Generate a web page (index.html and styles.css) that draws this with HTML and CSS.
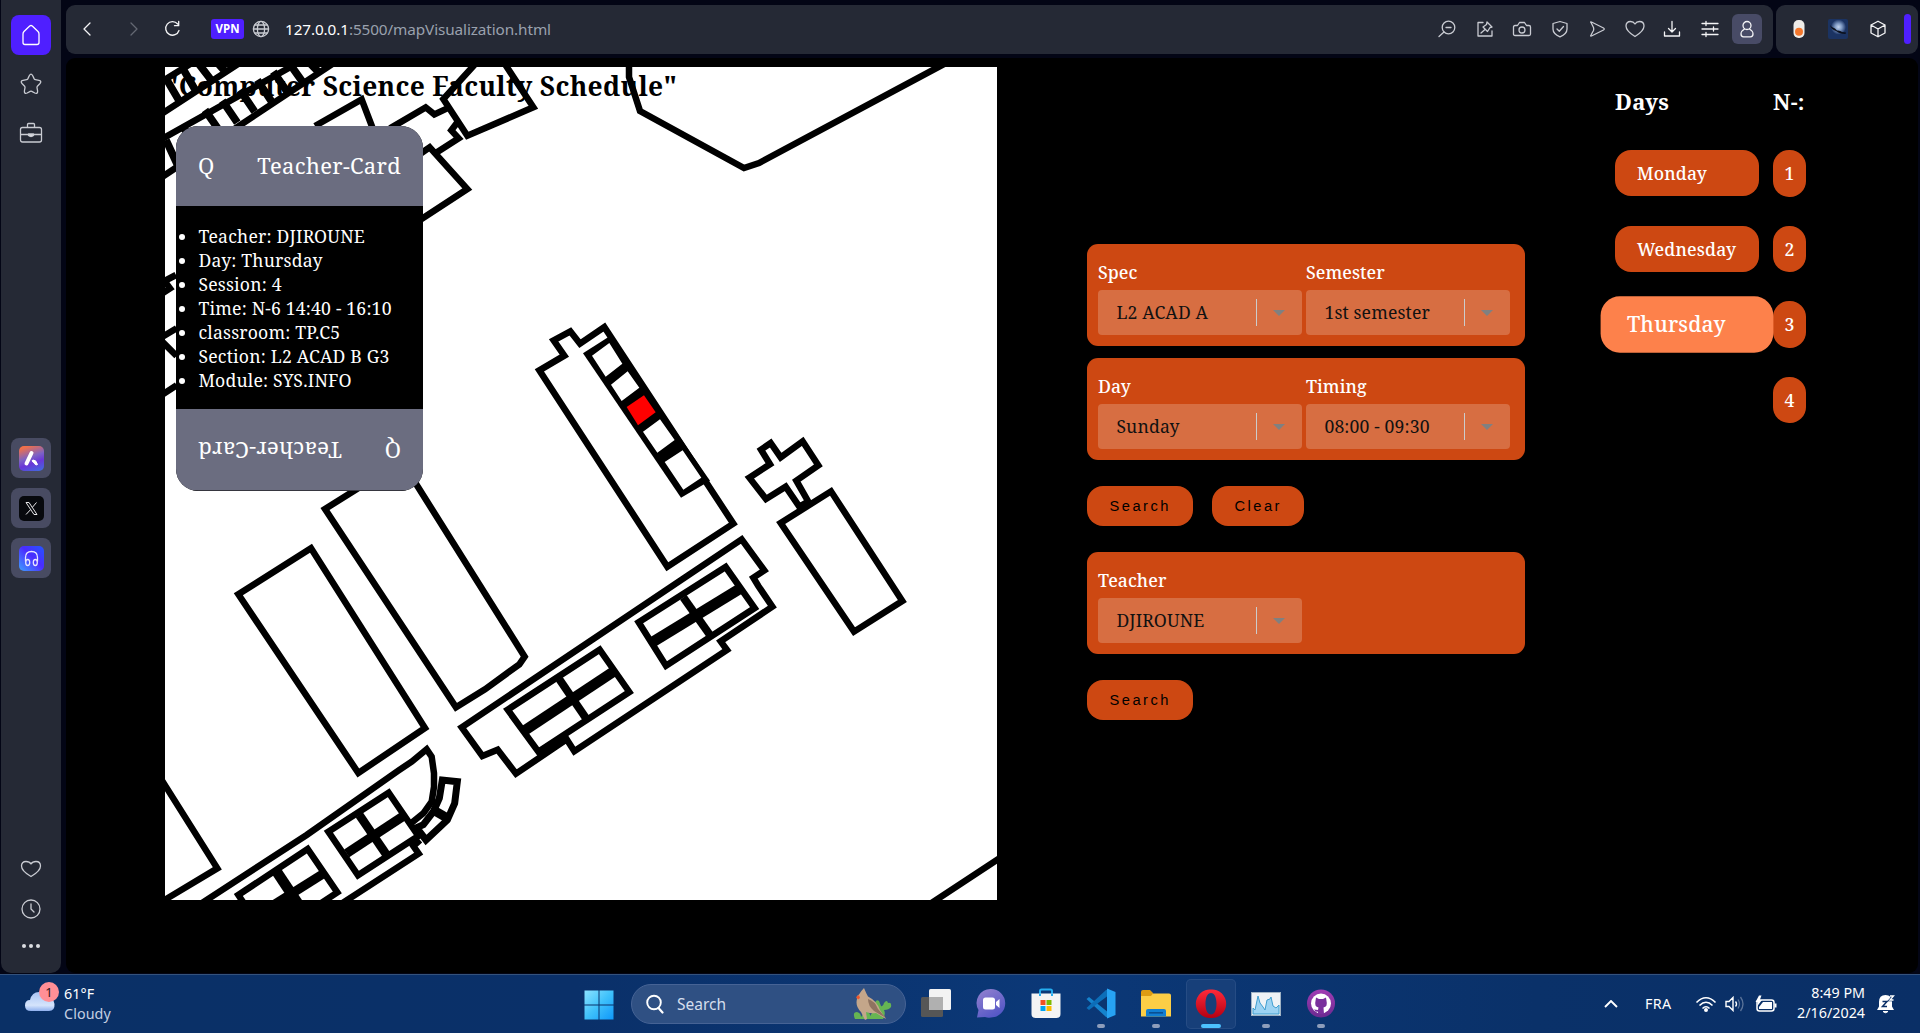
FILE: index.html
```html
<!DOCTYPE html>
<html lang="en">
<head>
<meta charset="utf-8">
<title>Computer Science Faculty Schedule</title>
<link rel="stylesheet" href="styles.css">
</head>
<body>
<div class="browser">
  <nav class="sidebar">
    <span class="home"><svg class="ic" width="22" height="24" viewBox="0 0 22 24"><path d="M3 11Q3 9.500 4 8.500L9.700 3Q11 2 12.300 3L18 8.500Q19 9.500 19 11V19.500Q19 21.500 17 21.500H5Q3 21.500 3 19.500Z"/></svg></span>
    <svg class="ic star" width="24" height="24" viewBox="0 0 24 24"><path d="M10.400 3.500Q12 .8 13.600 3.500L15.200 6.900Q15.600 7.600 16.400 7.700L20 8.300Q23 9 21 11.500L18.400 14.200Q17.900 14.800 18 15.600L18.600 19Q18.800 22.200 15.800 21L12.800 19.400Q12 19 11.200 19.400L8.200 21Q5.200 22.200 5.400 19L6 15.600Q6.100 14.800 5.600 14.200L3 11.500Q1 9 4 8.300L7.600 7.700Q8.400 7.600 8.800 6.900Z"/></svg>
    <svg class="ic case" width="24" height="22" viewBox="0 0 24 22"><path d="M8.500 5V2.500Q8.500 1.500 9.500 1.500H14.500Q15.500 1.500 15.500 2.500V5M3.500 5.500H20.500Q22.500 5.500 22.500 7.500V18Q22.500 20 20.500 20H3.500Q1.500 20 1.500 18V7.500Q1.500 5.500 3.500 5.500ZM1.500 12.500H9M15 12.500H22.500"/><path d="M9.500 12h5v1.500q-2.500 2-5 0z" fill="#dcdde2"/></svg>
    <div class="apps">
      <span class="app"><i class="tile aria"><svg width="25" height="25" viewBox="0 0 25 25"><path d="M7.500 17.500L12.500 7" stroke="#fff" stroke-width="4" stroke-linecap="round"/><path d="M14 14Q17 13.500 18.500 18.500L17 19Q14.500 17 13 14.800Z" fill="#fff" stroke="#fff"/></svg></i></span>
      <span class="app"><i class="tile xapp"><svg width="25" height="25" viewBox="0 0 25 25"><path d="M7 6.500H10L18 18.500H15ZM17.500 6.500L13.400 11.300M11.500 13.700L7 18.500" fill="none" stroke="#e8e8ea" stroke-width="1"/></svg></i></span>
      <span class="app"><i class="tile player"><svg width="25" height="25" viewBox="0 0 25 25"><path d="M6.500 15.500V11.500Q6.500 5.500 12.500 5.500T18.500 11.500V15.500" fill="none" stroke="#e6e4ff" stroke-width="1.300"/><ellipse cx="8.700" cy="16.500" rx="2" ry="3" fill="none" stroke="#e6e4ff" stroke-width="1.300"/><ellipse cx="16.300" cy="16.500" rx="2" ry="3" fill="none" stroke="#e6e4ff" stroke-width="1.300"/></svg></i></span>
    </div>
    <div class="tools">
      <svg class="ic" width="22" height="18" viewBox="0 0 22 18"><path d="M11 16.500Q1.500 11 1.500 6Q1.500 1.500 6 1.500Q9.500 1.500 11 4Q12.500 1.500 16 1.500Q20.500 1.500 20.500 6Q20.500 11 11 16.500Z"/></svg>
      <svg class="ic" width="20" height="20" viewBox="0 0 20 20"><circle cx="10" cy="10" r="9"/><path d="M10 5V10L13 13"/></svg>
      <svg class="dots" width="20" height="6" viewBox="0 0 20 6"><circle cx="3" cy="3" r="2"/><circle cx="10" cy="3" r="2"/><circle cx="17" cy="3" r="2"/></svg>
    </div>
  </nav>

  <div class="main">
    <header class="bars">
      <div class="address">
        <svg class="ic white back" width="10" height="14" viewBox="0 0 10 14"><path d="M8 1L2 7L8 13"/></svg>
        <svg class="ic dim fwd" width="10" height="14" viewBox="0 0 10 14"><path d="M2 1L8 7L2 13"/></svg>
        <svg class="ic white reload" width="17" height="17" viewBox="0 0 17 17"><path d="M13.700 4A6.800 6.800 0 1 0 15 10.500M14.700 1.500V5.700H10.500"/></svg>
        <span class="vpn">VPN</span>
        <svg class="ic globe" width="18" height="18" viewBox="0 0 18 18"><circle cx="9" cy="9" r="7.600"/><ellipse cx="9" cy="9" rx="3.600" ry="7.600"/><path d="M1.500 9H16.500M2.700 5H15.300M2.700 13H15.300"/></svg>
        <span class="url"><b>127.0.0.1</b>:5500/mapVisualization.html</span>
        <div class="actions">
          <svg class="ic" width="20" height="20" viewBox="0 0 20 20"><circle cx="11.500" cy="8.500" r="6.300"/><path d="M7 13L2 17.500M9 8.500H14"/></svg>
          <svg class="ic" width="20" height="20" viewBox="0 0 20 20"><path d="M8 3.500H3V17H17V12M12 3L17 8L15 8.500L12.500 12.500L8 8L11.500 5.500ZM10 10.500L6 14"/></svg>
          <svg class="ic" width="20" height="20" viewBox="0 0 20 20"><path d="M3 6.500H5.500L7.500 3.500H12.500L14.500 6.500H17Q18.500 6.500 18.500 8V15Q18.500 16.500 17 16.500H3Q1.500 16.500 1.500 15V8Q1.500 6.500 3 6.500Z"/><circle cx="10" cy="11" r="3"/></svg>
          <svg class="ic" width="20" height="20" viewBox="0 0 20 20"><path d="M10 2.500L17 4.500V10Q17 15 10 17.800Q3 15 3 10V4.500ZM7 10L9.300 12.300L13.500 7.500"/></svg>
          <svg class="ic" width="20" height="20" viewBox="0 0 20 20"><path d="M4 3.500Q3 2.500 4.500 3L16.500 9Q18 10 16.500 11L4.500 17Q3 17.500 4 16L6.500 11.500Q7 10 6.500 8.500Z"/></svg>
          <svg class="ic" width="20" height="20" viewBox="0 0 20 20"><path d="M10 17.500Q1 12 1 7Q1 2.500 5.500 2.500Q8.500 2.500 10 5Q11.500 2.500 14.500 2.500Q19 2.500 19 7Q19 12 10 17.500Z"/></svg>
          <svg class="ic white" width="20" height="20" viewBox="0 0 20 20"><path d="M10 2.500V13M6.500 9.500L10 13L13.500 9.500M2.500 13V17H17.500V13"/></svg>
          <svg class="ic white" width="20" height="20" viewBox="0 0 20 20"><path d="M2 4.500H18M2 10H18M2 15.500H18M6 2.500V6.500M13.500 8V12M6 13.500V17.500"/></svg>
          <span class="profile"><svg class="ic white" width="18" height="18" viewBox="0 0 18 18"><circle cx="9" cy="5.500" r="4"/><path d="M6.500 9Q3 11 3 14Q3 16.800 5.500 16.800H12.500Q15 16.800 15 14Q15 11 11.500 9"/></svg></span>
        </div>
      </div>
      <div class="exts">
        <svg width="14" height="20" viewBox="0 0 14 20"><rect x="1.500" y="1" width="11" height="18" rx="5" fill="#efece8"/><circle cx="7" cy="12.800" r="4" fill="#f4772d"/></svg>
        <svg width="20" height="20" viewBox="0 0 20 20"><defs><radialGradient id="moon"><stop offset="0" stop-color="#c4d4ee"/><stop offset=".45" stop-color="#7f9ac4"/><stop offset="1" stop-color="#1d3566"/></radialGradient></defs><rect width="20" height="20" rx="2" fill="#1b3362"/><circle cx="10.500" cy="8" r="7.500" fill="url(#moon)"/><path d="M2 6Q4 9 7 9.500L9 11.500Q12 11 14 13L18 13.500L17.500 15L13 14.500Q10 13.500 8 12Q3 10.500 2 6Z" fill="#0b101c"/></svg>
        <svg class="ic white" width="18" height="18" viewBox="0 0 18 18"><path d="M9 1.200L16 5V13L9 16.800L2 13V5ZM2 5L9 9L16 5M9 9V16.800"/></svg>
        <i class="bar"></i>
      </div>
    </header>

    <main class="page">
      <section class="map">
        <svg class="plan" width="832" height="833" viewBox="165 67 832 833">
          <rect x="165" y="67" width="832" height="833" fill="#fff"/>
          <g class="wall" transform="translate(160 60) scale(.33333)">
            <path d="M0 165L245 5M0 68L110 0"/>
            <path d="M22 62L62 130M70 28L110 97M115 10L158 66M165 0L200 40" stroke-width="23"/>
            <path d="M0 240L420 5M0 355L520 10"/>
            <path d="M18 240L55 320M66 195L105 258M135 150L180 215M187 122L232 188M240 90L284 155M292 60L335 125M340 35L382 96M388 10L428 66M440 0L478 38" stroke-width="23"/>
            <path d="M465 198L605 118L640 210"/>
            <path d="M690 205L797 142L823 163L860 146M952 5L850 117L922 227L1120 142L1030 5M890 190L874 211L896 235L832 276M780 282L809 262L922 387L780 480"/>
            <path d="M0 670L48 645M15 665L30 685L0 705M0 835L50 805M0 838L50 888M0 1008L50 976"/>
          </g>
          <path class="wall full" d="M629 60V77L640 111L744 168L759 163L946 63M930 904L1000 858"/>
          <g transform="translate(500 300) scale(.33333)">
            <path class="wall" d="M118 211L193 167L161 121L211 94L240 131L313 81L700 671L502 800Z"/>
            <path d="M249 160L330 108L630 542L543 593Z"/>
            <path fill="#fff" d="M276 167L328 129L367 191L317 230ZM333 254L383 214L418 263L365 303ZM429 395L480 358L524 420L472 458ZM494 486L548 451L604 533L550 569Z"/>
            <path fill="#f00" d="M380 321L432 286L467 337L414 376Z"/>
            <path class="wall" d="M748 533L810 493L783 449L812 429L842 472L908 424L955 496L889 542L925 605L898 620L857 560L798 597Z"/>
            <path class="wall" d="M842 669L993 574L1207 903L1062 995Z"/>
          </g>
          <g class="wall" transform="translate(440 520) scale(.33333)">
            <path d="M65 622L905 58L973 151L940 173L955 198L997 260L842 364L861 390L403 694L380 658L228 761L173 689L127 708Z"/>
            <path d="M203 569L479 389L568 516L295 695Z"/>
            <path d="M300 700L380 650" stroke-width="30"/>
            <path d="M250 634L525 452" stroke-width="32"/><path d="M358 478L440 598" stroke-width="24"/>
            <path d="M596 307L857 141L944 264L678 437Z"/>
            <path d="M635 368L905 203" stroke-width="32"/><path d="M730 232L812 348" stroke-width="24"/>
          </g>
          <g class="wall" transform="translate(160 480) scale(.33333)">
            <path d="M235 343L453 205L795 744L595 879Z"/>
            <path d="M495 87L725 -57L1094 530L1078 553L975 628L888 682Z"/>
            <path d="M0 892L172 1165L0 1268"/>
            <path d="M100 1286L440 1065L715 872L755 845L800 808L815 830L822 880V920L815 965L790 1000L755 1028"/>
            <path d="M505 1055L686 938L775 1068L594 1186Z"/>
            <path d="M560 1120L735 1005" stroke-width="28"/><path d="M598 1005L680 1125" stroke-width="26"/>
            <path d="M780 1080L760 1098L776 1121L540 1274"/>
            <path d="M765 1045L790 1034L820 995L838 955L847 900L892 905L884 970L862 1020L798 1080L775 1050" stroke-width="21"/>
            <path d="M825 993L868 1018" stroke-width="28"/>
            <path d="M265 1290L235 1245L443 1107L532 1237L460 1285"/>
            <path d="M320 1288L495 1178" stroke-width="28"/><path d="M350 1175L420 1280" stroke-width="32"/>
          </g>
        </svg>
        <h1 class="title">"Computer Science Faculty Schedule"</h1>
        <article class="card">
          <div class="cap"><span>Q</span><span>Teacher-Card</span></div>
          <ul class="facts">
            <li>Teacher: DJIROUNE</li>
            <li>Day: Thursday</li>
            <li>Session: 4</li>
            <li>Time: N-6 14:40 - 16:10</li>
            <li>classroom: TP.C5</li>
            <li>Section: L2 ACAD B G3</li>
            <li>Module: SYS.INFO</li>
          </ul>
          <div class="cap flip"><span>Q</span><span>Teacher-Card</span></div>
        </article>
      </section>

      <section class="forms">
        <div class="panel">
          <label>Spec<span class="select">L2 ACAD A<i></i></span></label>
          <label>Semester<span class="select">1st semester<i></i></span></label>
        </div>
        <div class="panel">
          <label>Day<span class="select">Sunday<i></i></span></label>
          <label>Timing<span class="select">08:00 - 09:30<i></i></span></label>
        </div>
        <div class="buttons"><button>Search</button><button>Clear</button></div>
        <div class="panel">
          <label>Teacher<span class="select">DJIROUNE<i></i></span></label>
        </div>
        <div class="buttons"><button>Search</button></div>
      </section>

      <section class="days">
        <div class="col">
          <h2>Days</h2>
          <span class="day">Monday</span>
          <span class="day">Wednesday</span>
          <span class="day active">Thursday</span>
        </div>
        <div class="col">
          <h2>N-:</h2>
          <span class="num">1</span>
          <span class="num">2</span>
          <span class="num">3</span>
          <span class="num">4</span>
        </div>
      </section>
    </main>
  </div>
</div>

<footer class="taskbar">
  <div class="weather">
    <svg width="38" height="34" viewBox="0 0 38 34"><defs><linearGradient id="cl" x2="0" y2="1"><stop offset="0" stop-color="#a9c4f4"/><stop offset=".7" stop-color="#d5e4fc"/><stop offset="1" stop-color="#8fb0ee"/></linearGradient></defs><path d="M7 29Q1 29 1 23.500Q1 18 6 18Q8 10 15 10Q20 10 22.500 15Q30 16 30.500 22Q31 29 25 29Z" fill="url(#cl)"/><circle cx="25" cy="10" r="10" fill="#ff8f96"/><text x="25" y="15" class="badge">1</text></svg>
    <p>61°F<br><span>Cloudy</span></p>
  </div>
  <div class="dock">
    <svg class="win" width="30" height="30" viewBox="0 0 30 30"><defs><linearGradient id="wn" gradientUnits="userSpaceOnUse" x1="0" y1="0" x2="30" y2="30"><stop offset="0" stop-color="#8ee4ff"/><stop offset=".5" stop-color="#3fc1fb"/><stop offset="1" stop-color="#0d96fa"/></linearGradient></defs><path fill="url(#wn)" d="M.5.500H14.500V14.500H.5ZM15.500.500H29.500V14.500H15.500ZM.5 15.500H14.500V29.500H.5ZM15.500 15.500H29.500V29.500H15.500Z"/></svg>
    <div class="search">
      <svg width="20" height="20" viewBox="0 0 20 20"><circle cx="9" cy="8.500" r="6.800" fill="none" stroke="#fff" stroke-width="1.900"/><path d="M13.500 14L17.500 18.500" stroke="#fff" stroke-width="2.200" stroke-linecap="round"/></svg>
      <span>Search</span>
      <svg class="bird" width="40" height="32" viewBox="0 0 40 32"><path d="M2 31Q-1 24 4 24Q8 25 8 29L12 24Q17 22 18 31ZM18 31Q16 25 22 24L22 15Q23 11 26 13L28 18Q30 19 31 15Q34 11 35 15Q39 14 38 19Q36 22 31 22Q33 26 30 31Z" fill="#66b552"/><path d="M11 0Q8 3 6 6.500Q3 8 4 11Q2 18 8 24L12 32L14 31L13 24Q18 26 23 25L33 31L27 22Q24 13 15 8.500Q13 5 11 0Z" fill="#c4a68a"/><path d="M15 11Q22 13 25 21L33 30L21 23Q15 18 15 11Z" fill="#8f7360"/><path d="M6 7L3 9L5 11.500L7 10Z" fill="#f0562d"/></svg>
    </div>
    <span class="task"><svg width="32" height="32" viewBox="0 0 32 32"><rect x="1" y="9" width="22" height="20" rx="1.500" fill="#565656"/><rect x="9" y="1" width="22" height="21" rx="1.500" fill="#f3f3f3"/><path d="M9 9H23V22H9Z" fill="#b0b0b0"/></svg></span>
    <span class="task"><svg width="32" height="32" viewBox="0 0 32 32"><defs><linearGradient id="ct" x2=".6" y2="1"><stop offset="0" stop-color="#9583cf"/><stop offset="1" stop-color="#5457c6"/></linearGradient></defs><path d="M16 1A14 14 0 0 1 16 29.500Q13 30 10 29L2 29.500L3.500 22A14 14 0 0 1 16 1Z" fill="url(#ct)"/><rect x="8" y="9.500" width="12" height="12" rx="2.500" fill="#fff"/><path d="M21 14L24.500 11V20L21 17Z" fill="#fff"/></svg></span>
    <span class="task"><svg width="32" height="32" viewBox="0 0 32 32"><path d="M10 8V3Q10 1.500 11.500 1.500H20.500Q22 1.500 22 3V8" fill="none" stroke="#25aef0" stroke-width="2"/><path d="M1.500 5.500H30.500V26Q30.500 30 26.500 30H5.500Q1.500 30 1.500 26Z" fill="#f4f4f4"/><path d="M10 8V5.500M22 8V5.500" stroke="#25aef0" stroke-width="2"/><path fill="#f25022" d="M10.500 12h5v5h-5z"/><path fill="#7fba00" d="M16.500 12h5v5h-5z"/><path fill="#00a4ef" d="M10.500 18h5v5h-5z"/><path fill="#ffb900" d="M16.500 18h5v5h-5z"/></svg></span>
    <span class="task run"><svg width="32" height="32" viewBox="0 0 32 32"><path d="M1.500 11L4 9L24 25V30L21 29Z" fill="#1583cd"/><path d="M1.500 20L4 22L24 7V1L21 2Z" fill="#0c6eb8"/><path d="M22 .5L30.500 4V27L22 30.500Z" fill="#27a3f3"/><path d="M22 9L13 15.500L22 22.500Z" fill="#0b3570"/></svg></span>
    <span class="task run"><svg width="32" height="32" viewBox="0 0 32 32"><path d="M1 4Q1 2 3 2H10L13 5V9H1Z" fill="#dd9c12"/><path d="M1 8H11L13 5.500H29Q31 5.500 31 7.500V28.500H1Z" fill="#fcce46"/><path d="M6 28.500V23Q6 21 8 21H24Q26 21 26 23V28.500Z" fill="#117fd4"/><rect x="9" y="24" width="14" height="1.600" fill="#0a4f92"/></svg></span>
    <span class="task run on"><svg width="32" height="32" viewBox="0 0 32 32"><defs><linearGradient id="op" x2="0" y2="1"><stop offset="0" stop-color="#ff2a3a"/><stop offset="1" stop-color="#b40012"/></linearGradient></defs><path fill="url(#op)" fill-rule="evenodd" d="M16 1.500A14 14.300 0 1 1 16 30A14 14.300 0 1 1 16 1.500ZM16 5C12.500 5 10.500 9.500 10.500 15.800S12.500 26.500 16 26.500S21.500 22 21.500 15.800S19.500 5 16 5Z"/></svg></span>
    <span class="task run"><svg width="32" height="32" viewBox="0 0 32 32"><rect x="1.500" y="4.500" width="29" height="23" fill="#eef2f6" stroke="#9fb2c4"/><path d="M3 26V20L5 22L8 8L10 15L13 19L15 22L17 12L20 11L21 9L23 18L26 20L29 17V26Z" fill="#9dd3f3" stroke="#3f9ed0"/></svg></span>
    <span class="task run"><svg width="32" height="32" viewBox="0 0 32 32"><defs><linearGradient id="gh" x2="0" y2="1"><stop offset="0" stop-color="#a13cb4"/><stop offset="1" stop-color="#6b2a90"/></linearGradient></defs><circle cx="16" cy="15.500" r="14" fill="url(#gh)"/><circle cx="16" cy="15.500" r="10" fill="#fff"/><path d="M11 9.500L14 11H18L21 9.500L21.500 13Q23 18.500 18.500 19.500L19 26H13V23.500Q10.500 24.500 9 21.500Q11 21.500 13 22L13.500 19.500Q9 18.500 10.500 13Z" fill="#79309c"/></svg></span>
  </div>
  <div class="tray">
    <svg class="up" width="14" height="8" viewBox="0 0 14 8"><path d="M1 7L7 1L13 7" fill="none" stroke="#fff" stroke-width="1.900"/></svg>
    <span class="lang">FRA</span>
    <svg width="22" height="18" viewBox="0 0 22 18"><path d="M1.500 7.500Q11-2 20.500 7.500M4.500 10.500Q11 4 17.500 10.500M7.500 13.500Q11 10 14.500 13.500" fill="none" stroke="#fff" stroke-width="1.600"/><circle cx="11" cy="15" r="2" fill="#fff"/></svg>
    <svg class="vol" width="20" height="16" viewBox="0 0 20 16"><path d="M1 5.500H4L8 1.500V14.500L4 10.500H1ZM10.500 5.500Q12.500 8 10.500 10.500" fill="none" stroke="#fff" stroke-width="1.400"/><path d="M13 3.500Q16 8 13 12.500M15.500 1Q20.500 8 15.500 15" fill="none" stroke="#5a7399" stroke-width="1.300"/></svg>
    <svg class="bat" width="22" height="18" viewBox="0 0 22 18"><rect x="2" y="5" width="17" height="11" rx="2.500" fill="none" stroke="#fff" stroke-width="1.500"/><path d="M8 7H17V14H4V12Z" fill="#fff"/><path d="M19.500 8.500H21.500V12.500H19.500Z" fill="#fff"/><path d="M4 .500L.5 7H3L2 11.500L7 5H4.800L6.500.500Z" fill="#fff"/></svg>
    <p>8:49 PM<br>2/16/2024</p>
    <svg class="bell" width="18" height="20" viewBox="0 0 18 20"><path d="M0 16L2 12.500V8Q2 1 8.500 1T15 8V12.500L17 16Z" fill="#fff"/><path d="M6 17.500H11Q8.500 20 6 17.500Z" fill="#fff" stroke="#fff"/><path d="M13 2H16.500L13 6H16.500" fill="none" stroke="#0b3068" stroke-width="2.600"/><path d="M5.500 7.500H10L5.500 12.500H10" fill="none" stroke="#0b3068" stroke-width="1.500"/><path d="M13 2H16.500L13 6H16.500" fill="none" stroke="#fff" stroke-width="1.300"/></svg>
  </div>
</footer>
</body>
</html>
```
FILE: styles.css
```css
* { box-sizing: border-box; }
body {
  margin: 0;
  width: 1920px;
  height: 1033px;
  overflow: hidden;
  display: flex;
  flex-direction: column;
  background: #030515;
  font-family: "Noto Sans", sans-serif;
}
svg { display: block; flex: none; }
p, h1, h2, ul { margin: 0; padding: 0; }

.browser { display: flex; height: 974px; gap: 5px; padding-left: 1px; }
.ic { fill: none; stroke: #c9cbd2; stroke-width: 1.3; stroke-linecap: round; stroke-linejoin: round; }
.ic.white { stroke: #f4f4f6; }
.ic.dim { stroke: #646873; }

.sidebar {
  width: 60px;
  height: 973px;
  display: flex;
  flex-direction: column;
  align-items: center;
  padding-top: 15px;
  background: #252935;
  border-radius: 0 0 10px 10px;
}
.home { display: grid; place-items: center; width: 40px; height: 40px; border-radius: 8px; background: #4f1fff; }
.home .ic { stroke: #fff; }
.star { margin-top: 17px; }
.case { margin-top: 26px; }
.apps { display: flex; flex-direction: column; gap: 10px; margin-top: 294px; }
.app { display: grid; place-items: center; width: 40px; height: 40px; border-radius: 8px; background: #484b62; }
.tile { display: block; width: 25px; height: 25px; border-radius: 5px; overflow: hidden; }
.aria { background: linear-gradient(160deg, #f0704a 10%, #7d63c4 45%, #6a36d8 65%, #3d6fe0); }
.xapp { background: #07090d; }
.player { background: linear-gradient(45deg, #3fa0ff, #4b2bff 55%, #2356ff); }
.tools { display: flex; flex-direction: column; align-items: center; gap: 21px; margin-top: 282px; }
.dots { margin-top: 3px; fill: #dcdde2; }

.main { flex: 1; padding: 5px 2px 0 0; }
.bars { display: flex; gap: 3px; height: 49px; }
.address { display: flex; align-items: center; width: 1707px; background: #252935; border-radius: 9px; padding: 0 0 2px 16px; }
.back { margin-right: 37px; }
.fwd { margin-right: 25px; }
.reload { margin-right: 30px; }
.vpn { width: 33px; height: 20px; margin-right: 8px; border-radius: 3px; background: #4f1fff; color: #fff; font: 700 11.5px/20px "Noto Sans", sans-serif; text-align: center; }
.globe { margin-right: 15px; }
.url { color: #9aa1ae; font-size: 15.3px; letter-spacing: -.1px; }
.url b { color: #fff; font-weight: 400; }
.actions { display: flex; align-items: center; gap: 17.500px; margin-left: auto; padding-right: 11px; }
.profile { display: grid; place-items: center; width: 30px; height: 30px; margin-left: -5px; border-radius: 6px; background: #484b66; }
.exts { display: flex; align-items: center; flex: 1; padding: 0 7px 2px 16px; background: #252935; border-radius: 9px; }
.exts svg:nth-child(2) { margin: 0 21px 0 22px; }
.bar { width: 7px; height: 30px; margin-left: auto; border-radius: 4px; background: #4f1fff; }

.page {
  position: relative;
  display: flex;
  height: 915px;
  margin-top: 4px;
  padding: 9px 0 0 99px;
  background: #000;
  border-radius: 9px;
  font-family: "Noto Serif", "DejaVu Serif Condensed", "DejaVu Serif", serif;
  font-size: 17.6px;
  line-height: 24px;
  color: #fff;
}
.map { position: relative; width: 832px; height: 833px; }
.wall { fill: none; stroke: #000; stroke-width: 19.5; }
.wall.full { stroke-width: 6.5; }
.title { position: absolute; left: 0; top: 1px; color: #000; font-size: 26.4px; line-height: 36px; font-weight: 700; letter-spacing: .33px; white-space: nowrap; }
.card { position: absolute; left: 11px; top: 59px; width: 247px; height: 365px; border-radius: 22px; overflow: hidden; background: #000; }
.cap { display: flex; justify-content: space-between; align-items: center; height: 80px; padding: 0 22px 2px; background: #6b6d80; font-size: 22px; line-height: 30px; letter-spacing: .3px; }
.cap.flip { height: 82px; transform: rotate(180deg); border-top: 1px solid #36363f; padding-bottom: 4px; }
.facts { height: 203px; padding: 18px 0 0 22.4px; letter-spacing: .2px; }
.facts li { white-space: nowrap; }

.forms { width: 438px; margin: 177px 0 0 90px; }
.panel { display: flex; gap: 4px; height: 102px; padding: 16px 11px 11px; border-radius: 11px; background: #cd4812; font-weight: 500; letter-spacing: .05px; }
.panel + .panel { margin-top: 12px; }
.panel label { width: 204px; }
.select { position: relative; display: flex; align-items: center; height: 45px; margin-top: 6px; padding: 0 0 2px 18.4px; border-radius: 4px; background: #d76e42; color: #111; font-weight: 400; letter-spacing: .15px; }
.select::before { content: ""; position: absolute; left: 158px; top: 9px; width: 1px; height: 27px; background: #ccc; }
.select i { position: absolute; left: 175px; top: 20px; width: 12px; height: 6px; background: #808080; clip-path: polygon(0 0, 100% 0, 50% 100%); }
.buttons { display: flex; gap: 19px; margin: 26px 0; }
button { height: 40px; padding: 0 22px 0 22.500px; border: 0; border-radius: 16px; background: #cd4812; color: #000; font: 14.67px "Liberation Sans", Arial, sans-serif; letter-spacing: 2.5px; }

.days { display: flex; gap: 14px; margin: 15px 0 0 90px; }
.col { display: flex; flex-direction: column; }
.col h2 { height: 68px; font-size: 22px; line-height: 38px; letter-spacing: .3px; }
.day, .num { height: 46px; margin-bottom: 29.6px; border-radius: 16px; background: #cd4812; line-height: 46px; font-weight: 500; }
.day { width: 144px; padding-left: 22px; letter-spacing: .15px; }
.day.active { height: 47px; transform: scale(1.2); background: #fd814b; }
.num { width: 33px; height: 46.6px; margin-bottom: 29px; text-align: center; }

.taskbar { display: flex; height: 59px; position: relative; color: #fff; background: linear-gradient(90deg, #0a3066, #0a3069 30%, #0b3877 55%, #0a3169 80%, #0a2f66); border-top: 1px solid #34527c; font-size: 14px; line-height: 20px; }
.weather { display: flex; width: 584px; padding: 7px 0 0 24px; }
.weather p { margin: 2px 0 0 2px; font-size: 14.3px; letter-spacing: .1px; }
.weather span { color: #c3cfe2; }
.badge { font: 13px "Noto Sans", sans-serif; text-anchor: middle; fill: #331418; }
.dock { display: flex; width: 1010px; }
.win { margin: 15px 17px 0 0; }
.search { display: flex; align-items: center; width: 275px; height: 40px; margin: 9px 4.6px 0 0; padding: 0 12px 0 13px; border: 1px solid #466395; border-radius: 20px; background: #2f5083; font-size: 15.5px; color: #d5deed; }
.search span { margin: 0 auto 0 12px; }
.task { position: relative; width: 50px; height: 50px; margin: 4px 5px 0 0; display: grid; place-items: center; }
.task.run::after { content: ""; position: absolute; left: 21px; bottom: 1px; width: 8px; height: 4px; border-radius: 2px; background: #8d9dbb; }
.task.on { background: #173f79; border-radius: 5px; box-shadow: inset 0 0 0 1px #264c84; }
.task.on::after { left: 15px; width: 20px; background: #4cc2ff; }
.tray { display: flex; align-items: center; flex: 1; }
.tray p { width: 80px; margin: 0 0 2px 8px; text-align: right; font-size: 14.3px; }
.up { margin-left: 10px; }
.lang { width: 29px; margin: 0 21px 0 27px; font-size: 14.3px; letter-spacing: .3px; }
.vol { margin-left: 8px; }
.bat { margin-left: 10px; }
.bell { margin-left: 12px; }
```
